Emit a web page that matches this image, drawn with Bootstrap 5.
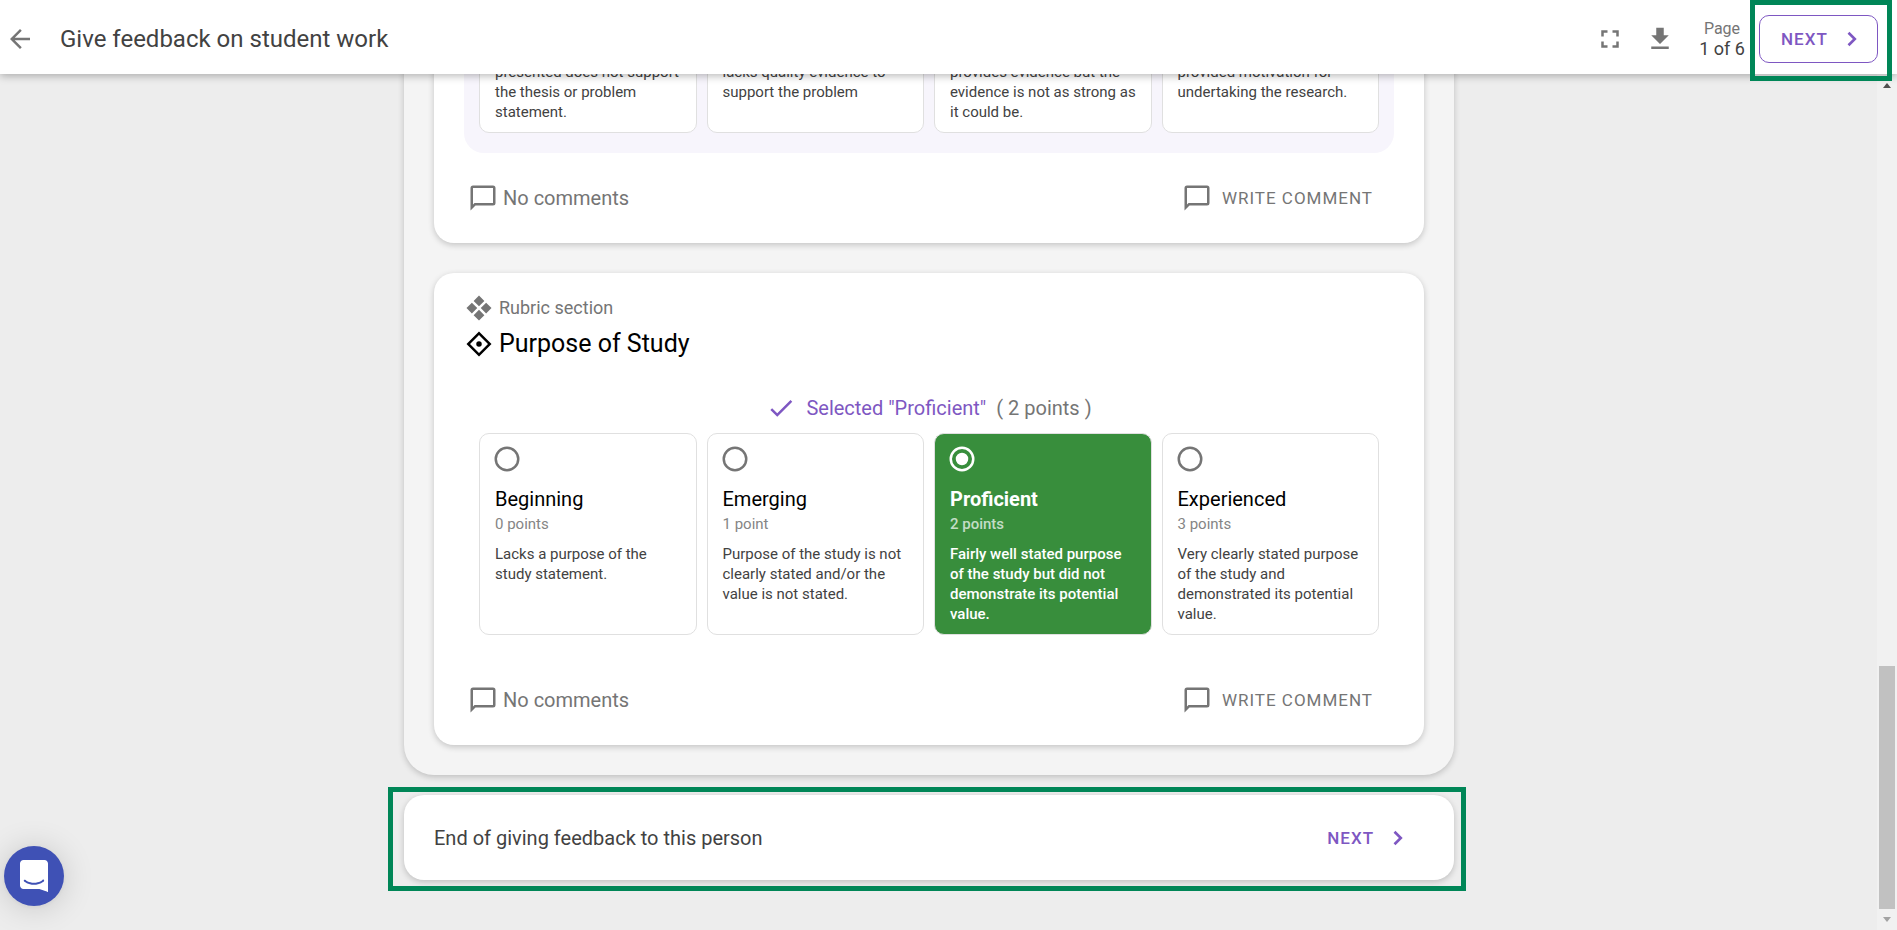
<!DOCTYPE html>
<html lang="en">
<head>
<meta charset="utf-8">
<meta name="viewport" content="width=device-width, initial-scale=1">
<title>Give feedback on student work</title>
<link href="https://cdn.jsdelivr.net/npm/bootstrap@5.3.0/dist/css/bootstrap.min.css" rel="stylesheet">
<style>
  :root { --violet: #7e57c2; --ink: #424242; --soft: #757575; --frame: #008657; }
  body { font-family: Roboto, "Liberation Sans", sans-serif; background: #ededed; color: var(--ink); font-size: 20px; line-height: 30px; }
  svg { display: block; flex: none; fill: currentColor; }
  .soft { color: var(--soft); }
  .violet { color: var(--violet); }

  .topbar { height: 74px; padding: 4px 19px 0 5px; background: #fff; box-shadow: 0 2px 8px rgba(0,0,0,.28); z-index: 5; }
  .topbar h1 { font-size: 24px; line-height: 30px; margin: 0 0 0 25px; font-weight: 400; }
  .icon-btn { color: var(--soft); border: 0; padding: 0; background: none; }
  .pager { width: 44px; margin: 0 15px 0 25px; font-size: 18px; line-height: 20px; white-space: nowrap; }
  .pager small { font-size: 16px; }
  .caps-btn { font-size: 17px; line-height: 30px; letter-spacing: 1px; }
  .next-btn { font-weight: 500; color: var(--violet); }
  .next-btn.outlined { width: 119px; height: 48px; border: 1px solid var(--violet); border-radius: 10px; padding: 0 11px 0 21px; }

  .framed { position: relative; }
  .framed::after { content: ""; position: absolute; border: 5px solid var(--frame); pointer-events: none; }
  .framed-top::after { inset: -15px -14px -18px -9px; }
  .framed-end::after { inset: -8px -12px -11px -16px; }

  .scroller { padding: 0 19px 50px 0; }
  .column { width: 100%; max-width: 1050px; }
  .sheet { background: #f4f4f4; border-radius: 30px; padding: 30px; box-shadow: 0 2px 6px rgba(0,0,0,.2); }
  .section-card, .end-card { background: #fff; border-radius: 20px; box-shadow: 0 2px 6px rgba(0,0,0,.2); }
  .section-card { padding: 20px 30px 15px; }
  .section-card + .section-card { margin-top: 30px; }
  .section-card h2 { font-size: 25px; line-height: 42px; font-weight: 400; color: #000; }
  .kicker { font-size: 18px; }
  .gap-icon { gap: 5px; }
  .gap-wide { gap: 10px; }
  .choices { margin: 0; padding: 0 15px 20px; border-radius: 20px; }
  .choices.tinted { background: #f7f5fc; padding-top: 20px; }
  .verdict { height: 50px; margin-top: 18px; }
  .choice-grid { display: grid; grid-template-columns: repeat(4, 1fr); gap: 10px; }
  .choice { border: 1px solid #e0e0e0; border-radius: 10px; background: #fff; padding: 10px 12px 10px 15px; font-size: 15px; line-height: 20px; }
  .choice .form-check-input { display: block; float: none; width: 30px; height: 30px; margin: 0 0 10px -3px; border: 0; box-shadow: none; background: center/30px no-repeat url("data:image/svg+xml,%3Csvg xmlns='http://www.w3.org/2000/svg' viewBox='0 0 24 24'%3E%3Cpath fill='%23757575' d='M12 20a8 8 0 1 1 0-16 8 8 0 0 1 0 16m0-18a10 10 0 1 0 0 20 10 10 0 0 0 0-20z'/%3E%3C/svg%3E"); }
  .choice .form-check-input:checked { background: center/30px no-repeat url("data:image/svg+xml,%3Csvg xmlns='http://www.w3.org/2000/svg' viewBox='0 0 24 24'%3E%3Cpath fill='%23fff' d='M12 20a8 8 0 1 1 0-16 8 8 0 0 1 0 16m0-18a10 10 0 1 0 0 20 10 10 0 0 0 0-20m0 5a5 5 0 1 0 0 10 5 5 0 0 0 0-10z'/%3E%3C/svg%3E"); }
  .choice-name { font-size: 20px; line-height: 30px; color: #000; }
  .choice-points { color: #858585; margin-bottom: 10px; }
  .choice.chosen { background: #388e3c; color: #fff; font-weight: 500; }
  .choice.chosen .choice-name { color: #fff; font-weight: 700; }
  .choice.chosen .choice-points { color: #c3ddc5; }
  .comment-row { height: 60px; margin-top: 15px; padding: 0 20px 0 4px; }
  .comment-btn { color: var(--soft); }
  .end-card { height: 85px; margin-top: 20px; padding: 0 41px 0 30px; }

  .track { width: 20px; background: #f1f1f1; padding: 9px 0 8px; }
  .thumb { width: 16px; height: 29%; background: #c1c1c1; }
  .chat { position: fixed; left: 4px; bottom: 24px; width: 60px; height: 60px; border: 0; background: #3f51b5; color: #fff; box-shadow: 0 2px 32px rgba(0,0,0,.16), 0 1px 6px rgba(0,0,0,.06); z-index: 6; }
</style>
</head>
<body>
<svg class="d-none" aria-hidden="true">
  <symbol id="bubble" viewBox="0 0 24 24"><path d="M20 2H4a2 2 0 0 0-2 2v18l4-4h14a2 2 0 0 0 2-2V4a2 2 0 0 0-2-2m0 14H5.2L4 17.2V4h16z"/></symbol>
  <symbol id="chevron" viewBox="0 0 24 24"><path d="M8.200 16.600 12.800 12 8.200 7.400 9.800 5.800l6.200 6.200-6.200 6.200z"/></symbol>
</svg>
<div class="d-flex flex-column vh-100 overflow-hidden">
  <header class="topbar d-flex align-items-center position-relative flex-shrink-0">
    <button class="icon-btn" aria-label="Back"><svg width="30" height="30" viewBox="0 0 24 24"><path d="M20 11H7.8l5.6-5.6L12 4l-8 8 8 8 1.400-1.400L7.800 13H20z"/></svg></button>
    <h1>Give feedback on student work</h1>
    <button class="icon-btn ms-auto" aria-label="Full screen"><svg width="30" height="30" viewBox="0 0 24 24"><path d="M5 5h5v2H7v3H5zm9 0h5v5h-2V7h-3zm3 9h2v5h-5v-2h3zm-7 3v2H5v-5h2v3z"/></svg></button>
    <button class="icon-btn ms-3 ps-1" aria-label="Download"><svg width="30" height="30" viewBox="0 0 24 24"><path d="M5 20h14v-2H5zM19 9h-4V3H9v6H5l7 7z"/></svg></button>
    <div class="pager d-flex flex-column align-items-center"><small class="soft">Page</small><span>1 of 6</span></div>
    <div class="framed framed-top">
      <button class="caps-btn next-btn outlined btn d-flex align-items-center justify-content-between">NEXT <svg width="28" height="28"><use href="#chevron"/></svg></button>
    </div>
  </header>

  <div class="d-flex flex-grow-1 overflow-hidden">
    <main class="scroller flex-grow-1 d-flex flex-column justify-content-end align-items-center">
      <div class="column">
        <div class="sheet">
          <section class="section-card">
            <div class="choices tinted">
              <div class="choice-grid">
                <div class="choice">presented does not support the thesis or problem statement.</div>
                <div class="choice">lacks quality evidence to support the problem</div>
                <div class="choice">provides evidence but the evidence is not as strong as it could be.</div>
                <div class="choice">provided motivation for undertaking the research.</div>
              </div>
            </div>
            <div class="comment-row d-flex align-items-center justify-content-between soft">
              <div class="d-flex align-items-center gap-icon"><svg width="30" height="30"><use href="#bubble"/></svg> No comments</div>
              <button class="caps-btn comment-btn btn p-0 d-flex align-items-center gap-wide"><svg width="30" height="30"><use href="#bubble"/></svg> WRITE COMMENT</button>
            </div>
          </section>

          <section class="section-card">
            <div class="kicker soft d-flex align-items-center gap-icon"><svg width="30" height="30" viewBox="0 0 24 24"><path d="m12 2 4.300 4.300-4.300 4.300-4.300-4.300zM6.300 7.700l4.300 4.300-4.300 4.300L2 12zM17.700 7.700 22 12l-4.300 4.300-4.300-4.300zM12 13.400l4.300 4.300L12 22l-4.300-4.300z"/></svg> Rubric section</div>
            <h2 class="d-flex align-items-center gap-icon m-0"><svg width="30" height="30" viewBox="0 0 24 24"><path d="M12 2 2 12l10 10 10-10zm0 2.800 7.200 7.200-7.200 7.200L4.800 12zM12 9.800a2.200 2.200 0 1 0 0 4.400 2.200 2.200 0 0 0 0-4.400z"/></svg> Purpose of Study</h2>
            <div class="verdict gap-wide d-flex align-items-center justify-content-center">
              <svg class="violet" width="30" height="30" viewBox="0 0 24 24"><path d="M21 7 9 19l-5.500-5.500 1.400-1.400L9 16.200 19.600 5.600z"/></svg>
              <span class="violet">Selected "Proficient"</span> <span class="soft">( 2 points )</span>
            </div>
            <div class="choices">
              <div class="choice-grid">
                <label class="choice"><input class="form-check-input" type="radio" name="purpose"><span class="choice-name d-block">Beginning</span><span class="choice-points d-block">0 points</span>Lacks a purpose of the study statement.</label>
                <label class="choice"><input class="form-check-input" type="radio" name="purpose"><span class="choice-name d-block">Emerging</span><span class="choice-points d-block">1 point</span>Purpose of the study is not clearly stated and/or the value is not stated.</label>
                <label class="choice chosen"><input class="form-check-input" type="radio" name="purpose" checked><span class="choice-name d-block">Proficient</span><span class="choice-points d-block">2 points</span>Fairly well stated purpose of the study but did not demonstrate its potential value.</label>
                <label class="choice"><input class="form-check-input" type="radio" name="purpose"><span class="choice-name d-block">Experienced</span><span class="choice-points d-block">3 points</span>Very clearly stated purpose of the study and demonstrated its potential value.</label>
              </div>
            </div>
            <div class="comment-row d-flex align-items-center justify-content-between soft">
              <div class="d-flex align-items-center gap-icon"><svg width="30" height="30"><use href="#bubble"/></svg> No comments</div>
              <button class="caps-btn comment-btn btn p-0 d-flex align-items-center gap-wide"><svg width="30" height="30"><use href="#bubble"/></svg> WRITE COMMENT</button>
            </div>
          </section>
        </div>

        <div class="end-card framed framed-end d-flex align-items-center justify-content-between">
          <span>End of giving feedback to this person</span>
          <button class="caps-btn next-btn btn p-0 d-flex align-items-center gap-wide">NEXT <svg width="28" height="28"><use href="#chevron"/></svg></button>
        </div>
      </div>
    </main>
    <div class="track d-flex flex-column align-items-center flex-shrink-0" aria-hidden="true">
      <svg width="8" height="5" viewBox="0 0 8 5"><path fill="#505050" d="m4 0 4 5H0z"/></svg>
      <div class="thumb mt-auto mb-2"></div>
      <svg width="8" height="5" viewBox="0 0 8 5"><path fill="#a3a3a3" d="M0 0h8L4 5z"/></svg>
    </div>
  </div>
</div>
<button class="chat rounded-circle d-flex align-items-center justify-content-center p-0" aria-label="Open chat">
  <svg width="28" height="32" viewBox="0 0 28 32"><path d="M28 32s-4.700-1.900-8.600-3H3.500C1.600 29 0 27.300 0 25.400V3.600C0 1.600 1.600 0 3.500 0h21C26.400 0 28 1.600 28 3.600zM24 20c-.4-.5-1.100-.5-1.500-.1 0 0-3.200 2.800-8.500 2.800s-8.400-2.800-8.500-2.800c-.4-.4-1.100-.3-1.500.1-.3.400-.3 1.100.2 1.500.1.100 3.800 3.300 9.800 3.300s9.600-3.200 9.800-3.300c.4-.4.5-1.100.2-1.500z"/></svg>
</button>
<script src="https://cdn.jsdelivr.net/npm/bootstrap@5.3.0/dist/js/bootstrap.bundle.min.js"></script>
</body>
</html>
